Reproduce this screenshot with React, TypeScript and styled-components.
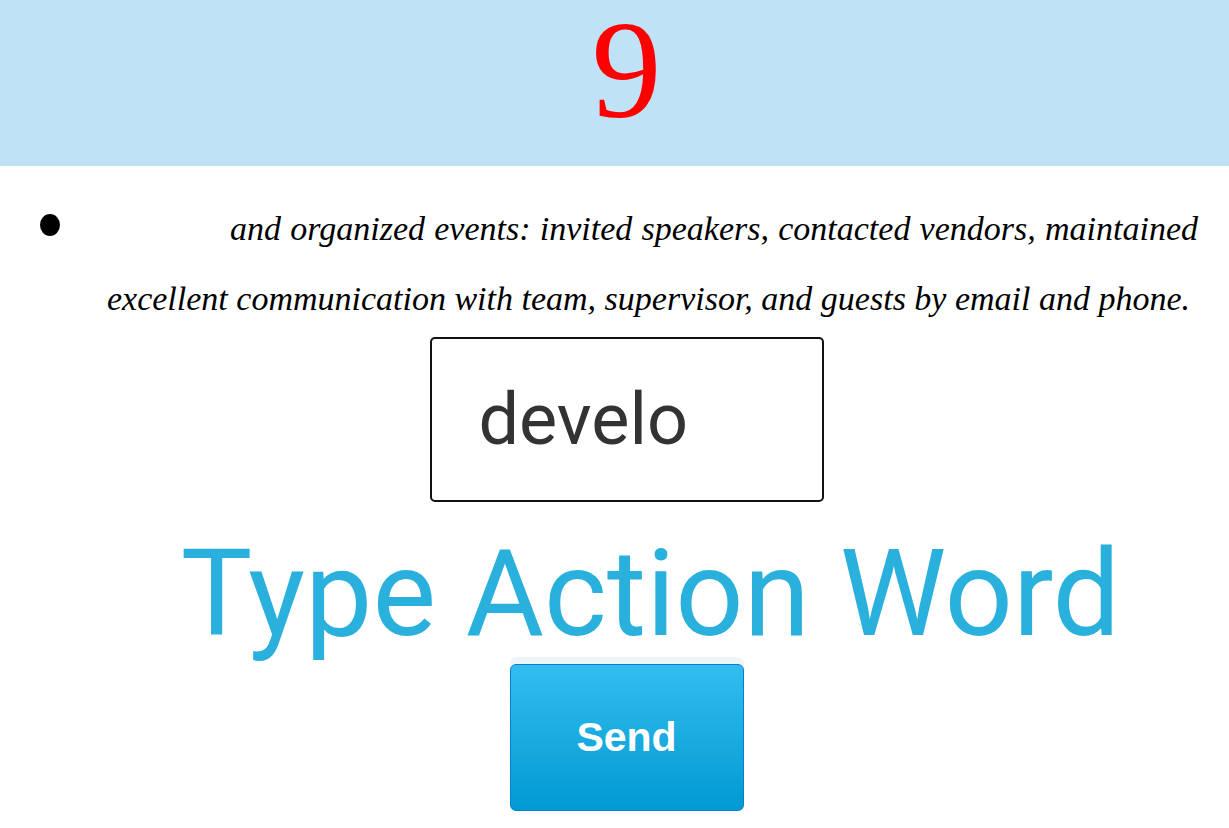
import React from 'react';
import styled, { createGlobalStyle } from 'styled-components';

const GlobalStyle = createGlobalStyle`
  html, body {
    margin: 0;
    padding: 0;
    background: #ffffff;
  }
  body {
    font-family: 'Liberation Serif', serif;
  }
`;

const Page = styled.div`
  display: flex;
  flex-direction: column;
  min-height: 828px;
`;

const Header = styled.header`
  height: 166px;
  background: #bfe2f7;
  display: flex;
  justify-content: center;
  padding-left: 24px;
`;

const Number = styled.h1`
  margin: 0;
  font-family: 'Liberation Serif', serif;
  font-weight: normal;
  font-size: 140px;
  line-height: 140px;
  color: #ff0000;
`;

const Task = styled.div`
  display: flex;
  align-items: flex-start;
  padding: 28px 31px 0 40px;
`;

const Bullet = styled.span`
  flex: none;
  width: 20px;
  height: 22px;
  margin-top: 20px;
  margin-right: 47px;
  border-radius: 50%;
  background: #000;
`;

const Description = styled.p`
  margin: 0;
  flex: 1;
  font-family: 'Liberation Serif', serif;
  font-style: italic;
  font-size: 34px;
  line-height: 70px;
  text-align: justify;
  text-indent: 123px;
  color: #000;
`;

const Form = styled.form`
  display: flex;
  flex-direction: column;
  align-items: center;
  padding-left: 24px;
`;

const WordInput = styled.input`
  box-sizing: border-box;
  width: 394px;
  height: 165px;
  margin-top: 3px;
  padding: 0 0 0 47px;
  border: 2px solid #111;
  border-radius: 5px;
  font-family: Roboto, sans-serif;
  font-size: 72px;
  color: #333;
  outline: none;
`;

const Prompt = styled.div`
  margin-top: 27px;
  margin-left: 48px;
  font-family: Roboto, sans-serif;
  font-size: 120px;
  line-height: 130px;
  color: #2ab0dc;
  white-space: nowrap;
`;

const SendButton = styled.button`
  width: 234px;
  height: 147px;
  margin-top: 5px;
  border: 1px solid #057fd0;
  border-radius: 6px;
  background: linear-gradient(to bottom, #33bdef 0%, #019ad2 100%);
  box-shadow: 0 -7px 0 0 #eef5f9;
  font-family: 'Liberation Sans', Arial, sans-serif;
  font-weight: bold;
  font-size: 41px;
  color: #ffffff;
  cursor: pointer;
`;

export default function App(): JSX.Element {
  return (
    <Page>
      <GlobalStyle />
      <Header>
        <Number>9</Number>
      </Header>
      <Task>
        <Bullet />
        <Description>
          and organized events: invited speakers, contacted vendors, maintained excellent communication
          with team, supervisor, and guests by email and phone.
        </Description>
      </Task>
      <Form onSubmit={(e) => e.preventDefault()}>
        <WordInput type="text" defaultValue="develo" />
        <Prompt>Type Action Word</Prompt>
        <SendButton type="submit">Send</SendButton>
      </Form>
    </Page>
  );
}
